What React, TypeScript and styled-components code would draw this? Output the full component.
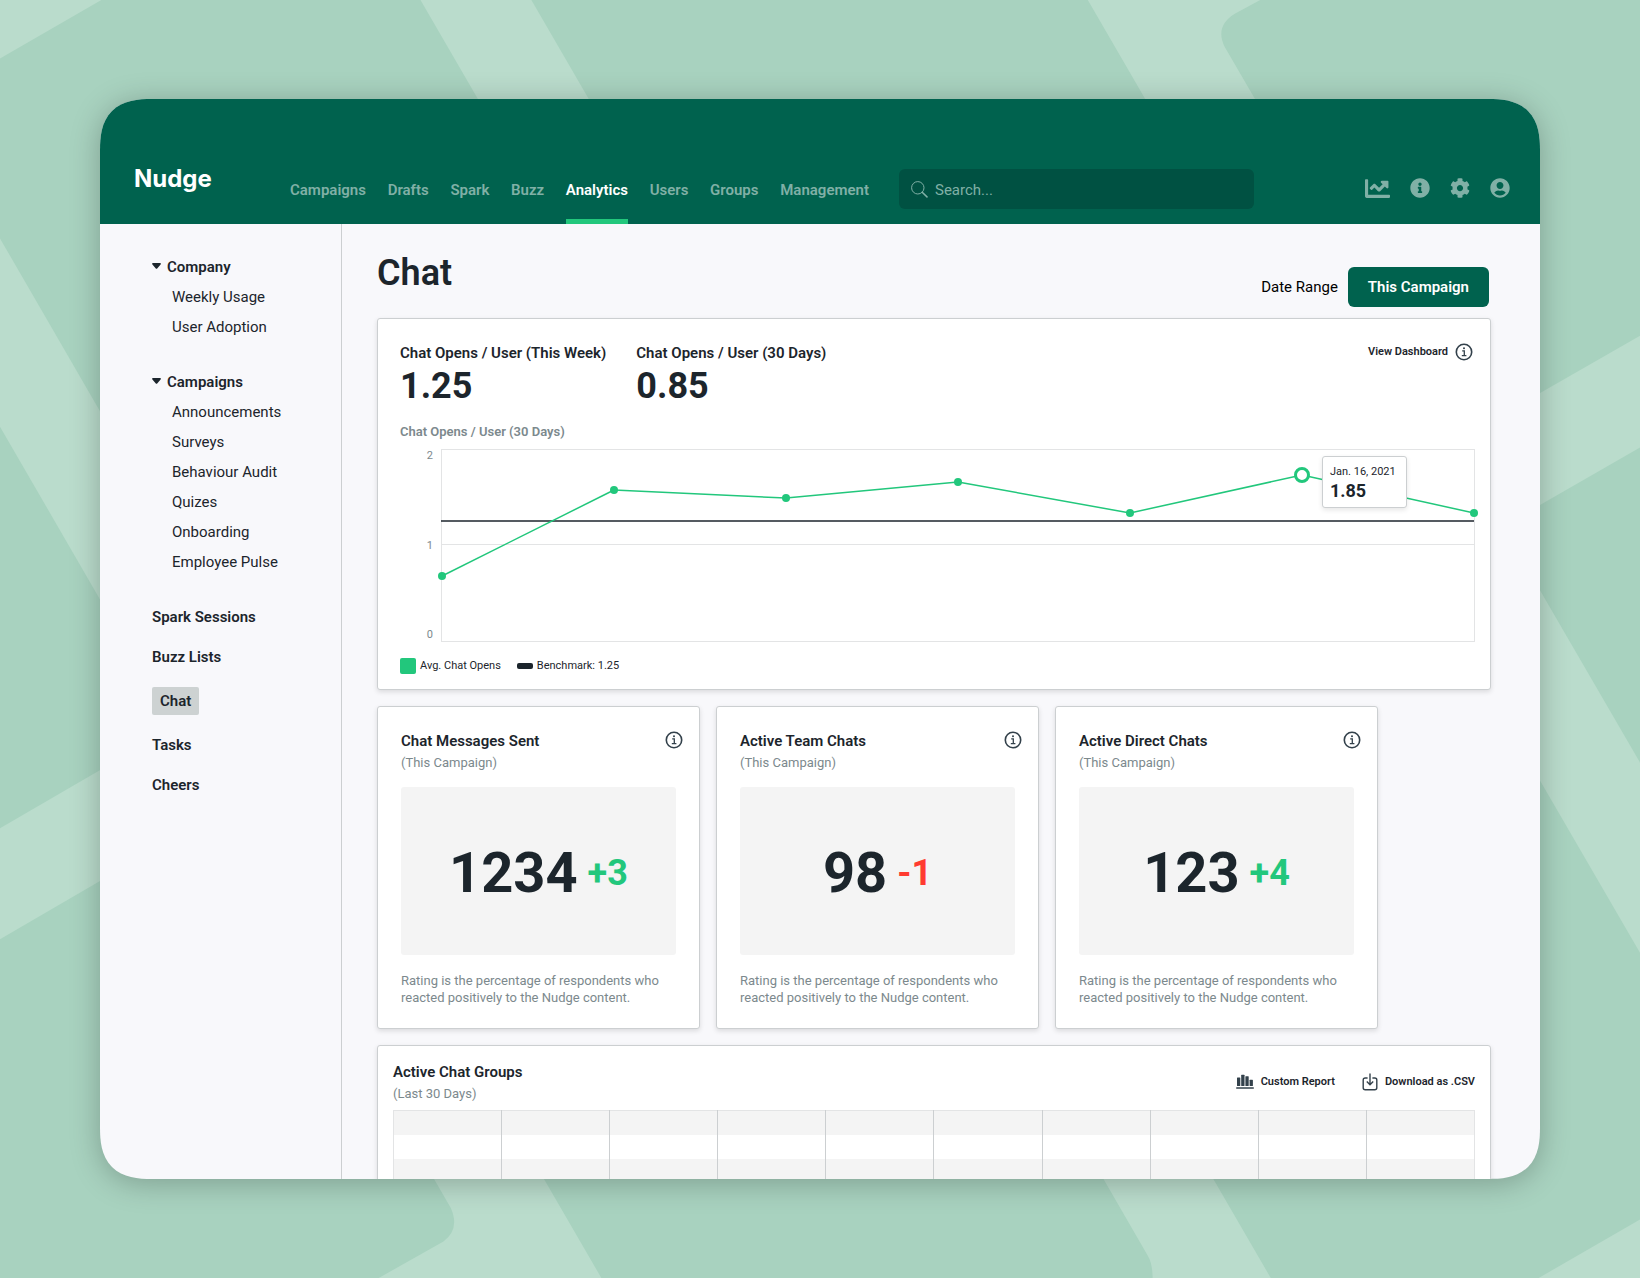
import React from "react";
import styled, { createGlobalStyle } from "styled-components";
import { FaChartLine, FaCog, FaInfoCircle, FaUserCircle } from "react-icons/fa";

const color = {
  brand: "#00624e",
  brandDark: "#005142",
  brandMuted: "#80b0a6",
  accent: "#22c77c",
  danger: "#ff3b30",
  ink: "#1c252c",
  icon: "#33414b",
  muted: "#7c898d",
  line: "#cccfd1",
  rule: "#e3e4e5",
  surface: "#f8f8fb",
  fill: "#f4f4f4",
};

const GlobalStyle = createGlobalStyle`
  *, *::before, *::after { box-sizing: border-box; }
  body {
    margin: 0;
    background: #a8d2bf;
    color: ${color.ink};
    font-family: Roboto, "Liberation Sans", sans-serif;
    font-size: 15px;
    line-height: 20px;
  }
  button, input { font: inherit; color: inherit; }
  button { padding: 0; border: 0; background: none; cursor: pointer; }
  a { color: inherit; text-decoration: none; }
  h1, h2, h3, p, ul, dl, dd { margin: 0; padding: 0; }
  ul { list-style: none; }
  svg { display: block; flex: none; }
`;

/* ---------- Shell ---------- */

const Page = styled.div`
  position: relative;
  z-index: 0;
  display: flex;
  height: 100vh;
  padding: 99px 100px;
  overflow: hidden;
`;

const Backdrop = styled.svg`
  position: absolute;
  inset: 0;
  z-index: -1;
  width: 100%;
  height: 100%;
`;

const Window = styled.div`
  display: flex;
  flex: 1;
  flex-direction: column;
  min-width: 0;
  overflow: hidden;
  border-radius: 42px;
  background: ${color.surface};
  box-shadow: 0 4px 30px rgba(0, 0, 0, 0.25);

  @supports (corner-shape: squircle) {
    border-radius: 52px;
    corner-shape: superellipse(1.4);
  }
`;

const TopBar = styled.header`
  display: flex;
  flex: none;
  align-items: flex-end;
  height: 125px;
  padding: 0 30px 0 34px;
  background: ${color.brand};
`;

const Logo = styled.a`
  width: 156px;
  padding-bottom: 29px;
  color: #fff;
  font-family: Inter, sans-serif;
  font-size: 24px;
  font-weight: 700;
  line-height: 32px;
`;

const Nav = styled.nav`
  display: flex;
  flex: 0 1 579px;
  justify-content: space-between;
`;

const NavLink = styled.a<{ $active?: boolean }>`
  padding: 0 0 19px;
  border-bottom: 5px solid ${(p) => (p.$active ? color.accent : "transparent")};
  color: ${(p) => (p.$active ? "#fff" : color.brandMuted)};
  font-weight: 600;
`;

const SearchBox = styled.label`
  display: flex;
  flex: 0 1 355px;
  align-items: center;
  gap: 7px;
  height: 40px;
  margin: 0 auto 15px 30px;
  padding: 0 12px;
  border-radius: 6px;
  background: ${color.brandDark};
  color: ${color.brandMuted};
`;

const SearchInput = styled.input`
  flex: 1;
  min-width: 0;
  padding: 2px 0 0;
  border: 0;
  outline: 0;
  background: none;
  &::placeholder {
    color: ${color.brandMuted};
    opacity: 1;
  }
`;

const Tools = styled.div`
  display: flex;
  align-items: center;
  gap: 20px;
  height: 40px;
  margin-bottom: 16px;
`;

const ToolButton = styled.button`
  color: ${color.brandMuted};
`;

const Body = styled.div`
  display: flex;
  flex: 1;
  min-height: 0;
`;

/* ---------- Sidebar ---------- */

const Sidebar = styled.aside`
  flex: none;
  width: 242px;
  padding: 33px 20px 0 52px;
  border-right: 1px solid ${color.line};
`;

const Group = styled.section`
  display: flex;
  flex-direction: column;
  align-items: flex-start;
  gap: 10px;
  margin-bottom: 35px;
`;

const GroupToggle = styled.button`
  display: flex;
  gap: 6px;
  font-weight: 600;
  svg { margin-top: 6px; }
`;

const SubList = styled.ul`
  display: flex;
  flex-direction: column;
  gap: 10px;
  padding-left: 20px;
`;

const TopList = styled.ul`
  display: flex;
  flex-direction: column;
  align-items: flex-start;
  gap: 20px;
  font-weight: 600;
`;

const TopLink = styled.a<{ $active?: boolean }>`
  display: block;
  padding: ${(p) => (p.$active ? "4px 8px" : "0")};
  border-radius: 2px;
  background: ${(p) => (p.$active ? "#cdd2d2" : "none")};
`;

/* ---------- Main ---------- */

const Main = styled.main`
  display: flex;
  flex: 1;
  flex-direction: column;
  gap: 16px;
  min-width: 0;
  padding: 27px 49px 0 35px;
`;

const PageHead = styled.div`
  display: flex;
  flex: none;
  align-items: flex-start;
  justify-content: space-between;
  height: 51px;
`;

const Title = styled.h1`
  font-size: 36px;
  font-weight: 600;
  line-height: 44px;
`;

const DateRange = styled.div`
  display: flex;
  align-items: center;
  gap: 10px;
  padding: 16px 2px 0 0;
  color: #000;
`;

const RangeButton = styled.button`
  height: 40px;
  padding: 0 20px;
  border-radius: 6px;
  background: ${color.brand};
  color: #fff;
  font-size: 15px;
  font-weight: 600;
`;

const Card = styled.section`
  flex: none;
  border: 1px solid ${color.line};
  border-radius: 3px;
  background: #fff;
  box-shadow: 0 2px 5px rgba(0, 0, 0, 0.12);
`;

const CardTitle = styled.h2`
  font-size: 15px;
  font-weight: 600;
  line-height: 20px;
`;

const Muted = styled.p`
  color: ${color.muted};
  font-size: 13px;
  line-height: 17px;
`;

const SmallAction = styled.button`
  display: flex;
  align-items: center;
  gap: 7px;
  color: ${color.ink};
  font-size: 11px;
  font-weight: 600;
  line-height: 18px;
  svg { color: ${color.icon}; }
`;

/* ---------- Trend card ---------- */

const TrendCard = styled(Card)`
  padding: 24px 15px 14px 22px;
`;

const TrendHead = styled.div`
  display: flex;
  align-items: flex-start;
  justify-content: space-between;
  padding-right: 2px;
`;

const Metrics = styled.dl`
  display: flex;
  gap: 30px;
`;

const MetricName = styled.dt`
  font-weight: 600;
`;

const MetricValue = styled.dd`
  font-size: 36px;
  font-weight: 700;
  line-height: 46px;
`;

const ChartTitle = styled.h3`
  margin: 14px 0 8px;
  color: ${color.muted};
  font-size: 13px;
  font-weight: 600;
  line-height: 18px;
`;

const ChartRow = styled.div`
  display: flex;
  gap: 8px;
  padding-left: 20px;
`;

const Axis = styled.div`
  display: flex;
  flex-direction: column;
  justify-content: space-between;
  width: 13px;
  color: ${color.muted};
  font-size: 11px;
  line-height: 14px;
  text-align: right;
`;

const Plot = styled.div`
  position: relative;
  flex: 1;
  height: 193px;
  border: 1px solid ${color.rule};
`;

const PlotSvg = styled.svg`
  width: 100%;
  height: 191px;
  overflow: visible;
`;

const Tooltip = styled.div`
  position: absolute;
  top: 6px;
  left: calc(83.33% + 20px);
  min-width: 85px;
  padding: 6px 7px;
  border: 1px solid ${color.line};
  border-radius: 3px;
  background: #fff;
  box-shadow: 0 2px 5px rgba(0, 0, 0, 0.1);
  font-size: 11px;
  line-height: 18px;
  white-space: nowrap;
  strong {
    display: block;
    font-size: 18px;
    line-height: 20px;
  }
`;

const Legend = styled.ul`
  display: flex;
  gap: 16px;
  margin-top: 15px;
  font-size: 11px;
  line-height: 18px;
`;

const LegendItem = styled.li`
  display: flex;
  align-items: center;
  gap: 4px;
`;

const Swatch = styled.span<{ $bar?: boolean }>`
  width: 16px;
  height: ${(p) => (p.$bar ? "6px" : "16px")};
  border-radius: 2px;
  background: ${(p) => (p.$bar ? color.ink : color.accent)};
`;

/* ---------- Stat cards ---------- */

const StatRow = styled.div`
  display: grid;
  flex: none;
  grid-template-columns: repeat(3, minmax(0, 323px));
  gap: 16px;
`;

const StatCard = styled(Card)`
  padding: 24px 23px 22px;
`;

const StatHead = styled.div`
  display: flex;
  align-items: flex-start;
  justify-content: space-between;
  margin-right: -7px;
`;

const StatHeading = styled.div`
  display: grid;
  gap: 3px;
`;

const InfoButton = styled.button`
  color: ${color.icon};
`;

const StatValue = styled.div`
  display: flex;
  align-items: center;
  justify-content: center;
  gap: 10px;
  height: 168px;
  margin: 16px 0 17px;
  padding-top: 4px;
  border-radius: 3px;
  background: ${color.fill};
  font-size: 56px;
  font-weight: 700;
  line-height: 60px;
`;

const Delta = styled.span<{ $down: boolean }>`
  color: ${(p) => (p.$down ? color.danger : color.accent)};
  font-size: 36px;
  line-height: 40px;
`;

/* ---------- Groups table ---------- */

const GroupsCard = styled(Card)`
  padding: 16px 15px;
`;

const GroupsHead = styled.div`
  display: flex;
  align-items: center;
  justify-content: space-between;
  margin-bottom: 8px;
`;

const Actions = styled.div`
  display: flex;
  gap: 27px;
`;

const Grid = styled.table`
  width: 100%;
  border: 1px solid ${color.rule};
  border-collapse: collapse;
  table-layout: fixed;
  td {
    height: 24px;
    padding: 0;
  }
  td + td { border-left: 1px solid ${color.line}; }
  tr:nth-child(odd) { background: ${color.fill}; }
`;

/* ---------- Drawings ---------- */

const InfoIcon = () => (
  <svg width="18" height="18" viewBox="0 0 18 18" fill="none" stroke="currentColor" aria-hidden="true">
    <circle cx="9" cy="9" r="7.7" strokeWidth="1.6" />
    <path d="M7.2 7.9H9.3V12.6M6.8 12.7H11.4" strokeWidth="1.3" />
    <circle cx="9" cy="5.2" r="1" fill="currentColor" stroke="none" />
  </svg>
);

const SearchIcon = () => (
  <svg width="17" height="17" viewBox="0 0 17 17" fill="none" stroke="currentColor" aria-hidden="true">
    <circle cx="6.8" cy="6.8" r="6.2" strokeWidth="1" />
    <path d="M11.2 11.2L16 15.9" strokeWidth="1.5" strokeLinecap="round" />
  </svg>
);

const Caret = () => (
  <svg width="9" height="6" viewBox="0 0 9 6" fill="currentColor" aria-hidden="true">
    <path d="M1 0h7c.9 0 1.2.9.6 1.5L5.2 5.4c-.4.5-1 .5-1.400 0L.4 1.500C-.2.900.1 0 1 0z" />
  </svg>
);

const BarsIcon = () => (
  <svg width="18" height="16" viewBox="0 0 18 16" fill="currentColor" aria-hidden="true">
    <rect x="1" y="3.600" width="3.300" height="8.400" rx=".5" />
    <rect x="5.200" y="0.800" width="3.300" height="11.200" rx=".5" />
    <rect x="9.400" y="2.200" width="3.300" height="9.800" rx=".5" />
    <rect x="13.600" y="5.800" width="3.300" height="6.200" rx=".5" />
    <rect x="0.200" y="13.200" width="17.600" height="1.600" rx=".3" />
  </svg>
);

const DownloadIcon = () => (
  <svg width="16" height="18" viewBox="0 0 16 18" fill="none" stroke="currentColor" strokeWidth="1.4" aria-hidden="true">
    <path d="M5.600 5H3.200Q1.200 5 1.200 7V14.800Q1.200 16.800 3.200 16.800H12.800Q14.800 16.800 14.800 14.800V7Q14.800 5 12.800 5H10.400" />
    <path d="M8 .600V11.600M4.800 8.600L8 11.800L11.200 8.600" />
  </svg>
);

const BackdropArt = () => (
  <Backdrop viewBox="0 0 1568 1222" preserveAspectRatio="xMidYMid slice" fill="#badccc" aria-hidden="true">
    <path d="M0 0H97L0 56Z" />
    <path d="M0 228L110 418V598L0 408Z" />
    <path d="M0 792L110 728V834L0 898Z" />
    <path d="M402 0H508L570 107H464Z" />
    <path d="M1040 0H1205L1181 13Q1161 25 1171 45L1207 107H1102Z" />
    <path d="M1568 321L1460 383V490L1568 428Z" />
    <path d="M1460 543L1568 729V911L1460 725Z" />
    <path d="M408 1115L431 1155Q440 1175 424 1187L362 1222H575L513 1115Z" />
    <path d="M1048 1115L1097 1200Q1102 1208 1102 1222H1215L1153 1115Z" />
    <path d="M1568 1166L1471 1222H1568Z" />
  </Backdrop>
);

/* ---------- Data ---------- */

const NAV = ["Campaigns", "Drafts", "Spark", "Buzz", "Analytics", "Users", "Groups", "Management"];

const TOOLS = [
  { label: "Reports", icon: <FaChartLine size={25} /> },
  { label: "Help", icon: <FaInfoCircle size={20} /> },
  { label: "Settings", icon: <FaCog size={20} /> },
  { label: "Account", icon: <FaUserCircle size={20} /> },
];

const GROUPS = [
  { title: "Company", items: ["Weekly Usage", "User Adoption"] },
  {
    title: "Campaigns",
    items: ["Announcements", "Surveys", "Behaviour Audit", "Quizes", "Onboarding", "Employee Pulse"],
  },
];

const SECTIONS = ["Spark Sessions", "Buzz Lists", "Chat", "Tasks", "Cheers"];

const METRICS = [
  { name: "Chat Opens / User (This Week)", value: "1.25" },
  { name: "Chat Opens / User (30 Days)", value: "0.85" },
];

/* Heights of the weekly points inside the plot, measured from its top edge. */
const POINTS = [126, 40, 48, 32, 63, 25, 63];
const SELECTED = 5;

const STATS = [
  { title: "Chat Messages Sent", value: "1234", delta: "+3" },
  { title: "Active Team Chats", value: "98", delta: "-1" },
  { title: "Active Direct Chats", value: "123", delta: "+4" },
];

const at = (i: number) => `${(i * 100) / (POINTS.length - 1)}%`;

const TrendChart = () => (
  <PlotSvg role="img" aria-label="Average chat opens per user over 30 days">
    <line x1="0" x2="100%" y1="94.5" y2="94.5" stroke={color.rule} />
    <line x1="-1" x2="100%" y1="71" y2="71" stroke={color.ink} strokeWidth="1.5" />
    {POINTS.slice(1).map((y, i) => (
      <line key={i} x1={at(i)} y1={POINTS[i]} x2={at(i + 1)} y2={y} stroke={color.accent} strokeWidth="1.5" />
    ))}
    {POINTS.map((y, i) =>
      i === SELECTED ? (
        <circle key={i} cx={at(i)} cy={y} r="6.500" fill="#fff" stroke={color.accent} strokeWidth="3" />
      ) : (
        <circle key={i} cx={at(i)} cy={y} r="4" fill={color.accent} />
      )
    )}
  </PlotSvg>
);

export default function App() {
  return (
    <>
      <GlobalStyle />
      <Page>
        <BackdropArt />
        <Window>
          <TopBar>
            <Logo href="#">Nudge</Logo>
            <Nav>
              {NAV.map((n) => (
                <NavLink key={n} href="#" $active={n === "Analytics"}>
                  {n}
                </NavLink>
              ))}
            </Nav>
            <SearchBox>
              <SearchIcon />
              <SearchInput type="search" placeholder="Search..." aria-label="Search" />
            </SearchBox>
            <Tools>
              {TOOLS.map((t) => (
                <ToolButton key={t.label} type="button" aria-label={t.label}>
                  {t.icon}
                </ToolButton>
              ))}
            </Tools>
          </TopBar>

          <Body>
            <Sidebar>
              {GROUPS.map((g) => (
                <Group key={g.title}>
                  <GroupToggle type="button" aria-expanded="true">
                    <Caret />
                    {g.title}
                  </GroupToggle>
                  <SubList>
                    {g.items.map((item) => (
                      <li key={item}>
                        <a href="#">{item}</a>
                      </li>
                    ))}
                  </SubList>
                </Group>
              ))}
              <TopList>
                {SECTIONS.map((s) => (
                  <li key={s}>
                    <TopLink href="#" $active={s === "Chat"}>
                      {s}
                    </TopLink>
                  </li>
                ))}
              </TopList>
            </Sidebar>

            <Main>
              <PageHead>
                <Title>Chat</Title>
                <DateRange>
                  <span id="range-label">Date Range</span>
                  <RangeButton type="button" aria-describedby="range-label">
                    This Campaign
                  </RangeButton>
                </DateRange>
              </PageHead>

              <TrendCard>
                <TrendHead>
                  <Metrics>
                    {METRICS.map((m) => (
                      <div key={m.name}>
                        <MetricName>{m.name}</MetricName>
                        <MetricValue>{m.value}</MetricValue>
                      </div>
                    ))}
                  </Metrics>
                  <SmallAction type="button">
                    View Dashboard
                    <InfoIcon />
                  </SmallAction>
                </TrendHead>
                <ChartTitle>Chat Opens / User (30 Days)</ChartTitle>
                <ChartRow>
                  <Axis>
                    <span>2</span>
                    <span>1</span>
                    <span>0</span>
                  </Axis>
                  <Plot>
                    <TrendChart />
                    <Tooltip>
                      Jan. 16, 2021
                      <strong>1.85</strong>
                    </Tooltip>
                  </Plot>
                </ChartRow>
                <Legend>
                  <LegendItem>
                    <Swatch />
                    Avg. Chat Opens
                  </LegendItem>
                  <LegendItem>
                    <Swatch $bar />
                    Benchmark: 1.25
                  </LegendItem>
                </Legend>
              </TrendCard>

              <StatRow>
                {STATS.map((s) => (
                  <StatCard key={s.title}>
                    <StatHead>
                      <StatHeading>
                        <CardTitle>{s.title}</CardTitle>
                        <Muted>(This Campaign)</Muted>
                      </StatHeading>
                      <InfoButton type="button" aria-label={`About ${s.title}`}>
                        <InfoIcon />
                      </InfoButton>
                    </StatHead>
                    <StatValue>
                      {s.value}
                      <Delta $down={s.delta.startsWith("-")}>{s.delta}</Delta>
                    </StatValue>
                    <Muted>Rating is the percentage of respondents who reacted positively to the Nudge content.</Muted>
                  </StatCard>
                ))}
              </StatRow>

              <GroupsCard>
                <GroupsHead>
                  <StatHeading>
                    <CardTitle>Active Chat Groups</CardTitle>
                    <Muted>(Last 30 Days)</Muted>
                  </StatHeading>
                  <Actions>
                    <SmallAction type="button">
                      <BarsIcon />
                      Custom Report
                    </SmallAction>
                    <SmallAction type="button">
                      <DownloadIcon />
                      Download as .CSV
                    </SmallAction>
                  </Actions>
                </GroupsHead>
                <Grid aria-label="Active chat groups">
                  <tbody>
                    {Array.from({ length: 6 }, (_, r) => (
                      <tr key={r}>
                        {Array.from({ length: 10 }, (_, c) => (
                          <td key={c} />
                        ))}
                      </tr>
                    ))}
                  </tbody>
                </Grid>
              </GroupsCard>
            </Main>
          </Body>
        </Window>
      </Page>
    </>
  );
}
